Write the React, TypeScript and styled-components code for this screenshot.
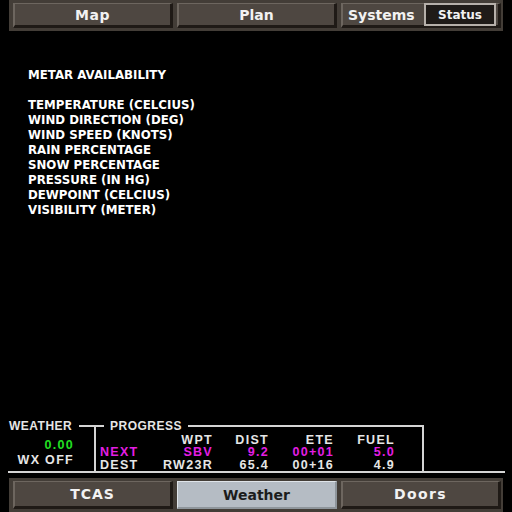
import React from "react";
import styled, { createGlobalStyle, css } from "styled-components";

const Global = createGlobalStyle`
  html, body { margin: 0; padding: 0; background: #000; }
  body { width: 512px; height: 512px; overflow: hidden; }
`;

const Screen = styled.div`
  width: 512px;
  height: 512px;
  background: #000;
  display: flex;
  flex-direction: column;
  font-family: "DejaVu Sans", Verdana, sans-serif;
`;

const Bar = styled.div<{ $bottom?: boolean }>`
  box-sizing: border-box;
  margin: 0 9px;
  height: ${(p) => (p.$bottom ? 34 : 31)}px;
  padding: 3px 2px 3px 4px;
  background: #433d37;
  display: flex;
  gap: 4px;
`;

const Button = styled.div<{ $active?: boolean; $spacing?: number }>`
  box-sizing: border-box;
  width: 160px;
  height: 100%;
  display: flex;
  align-items: center;
  justify-content: center;
  font-weight: bold;
  font-size: 14px;
  letter-spacing: ${(p) => p.$spacing ?? 0}px;
  color: #f2f2f2;
  background: #4e4741;
  border-style: solid;
  border-width: 1px 3px 3px 2px;
  border-color: #6d665f #1f1a16 #1f1a16 #6d665f;
  ${(p) =>
    p.$active &&
    css`
      background: #b5bcc4;
      color: #1c1c1c;
      border-width: 1px 2px 2px 1px;
      border-color: #dfe4e9 #8e959b #8e959b #dfe4e9;
    `}
`;

const Group = styled(Button)`
  justify-content: space-between;
  padding: 0 2px 0 5px;
`;

const StatusBox = styled.div`
  box-sizing: border-box;
  width: 72px;
  height: 23px;
  display: flex;
  align-items: center;
  justify-content: center;
  background: #1f1b18;
  border: 2px solid #b6b0aa;
  font-size: 12px;
  color: #f2f2f2;
`;

const Main = styled.div`
  flex: 1;
  padding: 37px 0 0 28px;
  color: #fff;
  font-size: 11.8px;
  font-weight: bold;
  line-height: 15px;
`;

const Line = styled.div`
  min-height: 15px;
  white-space: pre;
`;

const WeatherPanel = styled.div`
  margin: 0 7px 5px 8px;
  border-bottom: 2px solid #d4d4d4;
  display: flex;
  align-items: flex-start;
  font-family: "Liberation Sans", Arial, sans-serif;
  font-weight: bold;
  font-size: 12px;
  letter-spacing: 0.5px;
  color: #e6e6e6;
`;

const WxCol = styled.div`
  width: 86px;
  display: flex;
  flex-direction: column;
`;

const WxHeader = styled.div`
  display: flex;
  align-items: center;
  line-height: 12px;
  padding-left: 1px;
`;

const Rule = styled.div`
  flex: 1;
  margin-left: 7px;
  border-top: 2px solid #d4d4d4;
`;

const WxValues = styled.div`
  margin-top: 7px;
  padding-right: 20px;
  text-align: right;
  line-height: 13px;
  font-size: 12.5px;
  letter-spacing: 1.3px;
`;

const Value = styled.div<{ $c?: string; $gap?: number }>`
  color: ${(p) => p.$c ?? "#e6e6e6"};
  margin-top: ${(p) => p.$gap ?? 0}px;
`;

const Progress = styled.fieldset`
  margin: 0;
  padding: 2px 0 0 4px;
  width: 330px;
  box-sizing: border-box;
  border: 2px solid #d4d4d4;
  border-bottom: none;
  min-inline-size: 0;
`;

const Legend = styled.legend`
  padding: 0 6px;
  margin-left: 4px;
  line-height: 12px;
`;

const Grid = styled.div`
  display: grid;
  grid-template-columns: 50px 63px 56px 65px 61px;
  grid-auto-rows: 12.5px;
  line-height: 12.5px;
  font-size: 12.5px;
  letter-spacing: 1.3px;
`;

const Cell = styled.div<{ $c?: string; $left?: boolean }>`
  text-align: ${(p) => (p.$left ? "left" : "right")};
  color: ${(p) => p.$c ?? "#e6e6e6"};
  white-space: nowrap;
`;

const metar = [
  "METAR AVAILABILITY",
  "",
  "TEMPERATURE (CELCIUS)",
  "WIND DIRECTION (DEG)",
  "WIND SPEED (KNOTS)",
  "RAIN PERCENTAGE",
  "SNOW PERCENTAGE",
  "PRESSURE (IN HG)",
  "DEWPOINT (CELCIUS)",
  "VISIBILITY (METER)",
];

const MAG = "#e41ee4";

const rows: { c?: string; cells: string[] }[] = [
  { cells: ["", "WPT", "DIST", "ETE", "FUEL"] },
  { c: MAG, cells: ["NEXT", "SBV", "9.2", "00+01", "5.0"] },
  { cells: ["DEST", "RW23R", "65.4", "00+16", "4.9"] },
];

export default function App() {
  return (
    <Screen>
      <Global />
      <Bar>
        <Button $spacing={0.6}>Map</Button>
        <Button>Plan</Button>
        <Group>
          <span>Systems</span>
          <StatusBox>Status</StatusBox>
        </Group>
      </Bar>
      <Main>
        {metar.map((t, i) => (
          <Line key={i}>{t}</Line>
        ))}
      </Main>
      <WeatherPanel>
        <WxCol>
          <WxHeader>
            WEATHER
            <Rule />
          </WxHeader>
          <WxValues>
            <Value $c="#22e022">0.00</Value>
            <Value $gap={2}>WX OFF</Value>
          </WxValues>
        </WxCol>
        <Progress>
          <Legend>PROGRESS</Legend>
          <Grid>
            {rows.map((r, ri) =>
              r.cells.map((t, ci) => (
                <Cell key={`${ri}-${ci}`} $c={r.c} $left={ci === 0}>
                  {t}
                </Cell>
              ))
            )}
          </Grid>
        </Progress>
      </WeatherPanel>
      <Bar $bottom>
        <Button $spacing={1}>TCAS</Button>
        <Button $active>Weather</Button>
        <Button $spacing={1.4}>Doors</Button>
      </Bar>
    </Screen>
  );
}
